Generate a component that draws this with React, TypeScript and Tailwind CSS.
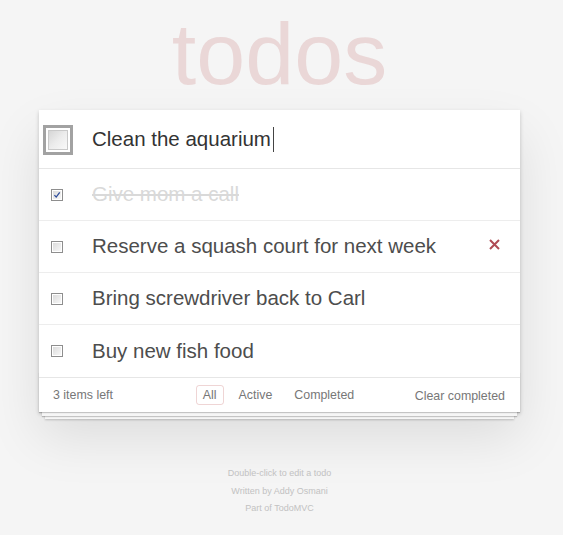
import React from 'react';

type Todo = {
  id: number;
  title: string;
  completed: boolean;
};

const todos: Todo[] = [
  { id: 1, title: 'Give mom a call', completed: true },
  { id: 2, title: 'Reserve a squash court for next week', completed: false },
  { id: 3, title: 'Bring screwdriver back to Carl', completed: false },
  { id: 4, title: 'Buy new fish food', completed: false },
];

function SmallCheckbox({ checked }: { checked: boolean }) {
  return (
    <div className="w-[12px] h-[12px] border border-[#8e8e8e] bg-white p-px">
      <div className="relative w-full h-full bg-gradient-to-br from-[#dcdcdc] to-[#f7f7f7]">
        {checked && (
          <svg viewBox="0 0 10 10" className="absolute inset-0 w-full h-full">
            <path d="M1.8 5.2 L4 7.6 L8.4 1.6" fill="none" stroke="#2c4b9b" strokeWidth="1.6" />
          </svg>
        )}
      </div>
    </div>
  );
}

function ToggleAll() {
  return (
    <div className="w-[30px] h-[30px] border-[3px] border-[#a2a2a2] bg-white p-[2px]">
      <div className="w-full h-full border border-[#c9c9c9] bg-gradient-to-br from-[#d6d6d6] via-[#ececec] to-[#f9f9f9]" />
    </div>
  );
}

function TodoItem({ todo, hovered }: { todo: Todo; hovered?: boolean }) {
  return (
    <li className="h-[52px] flex items-center border-b border-[#ededed] last:border-b-0">
      <div className="w-[53px] pl-[12px]">
        <SmallCheckbox checked={todo.completed} />
      </div>
      <span
        className={
          todo.completed
            ? 'flex-1 text-[20.5px] text-[#d9d9d9] line-through'
            : 'flex-1 text-[20.5px] text-[#4d4d4d]'
        }
      >
        {todo.title}
      </span>
      {hovered && (
        <svg viewBox="0 0 11 11" className="w-[11px] h-[11px] mr-[20px] mb-[5px]">
          <path d="M1 1 L10 10 M10 1 L1 10" stroke="#b04b55" strokeWidth="2" />
        </svg>
      )}
    </li>
  );
}

export default function App() {
  return (
    <div className="min-h-[535px] bg-[#f5f5f5] font-['Liberation_Sans',Arial,sans-serif]">
      <div className="w-[559px] pt-[10px]">
        <h1 className="h-[88px] text-center text-[88px] leading-[88px] text-[rgba(175,47,47,0.15)]">
          todos
        </h1>

        <section className="mt-[12px] mx-auto w-[481px] bg-white shadow-[0_2px_4px_0_rgba(0,0,0,0.2),0_25px_50px_0_rgba(0,0,0,0.1)]">
          <header className="h-[58px] flex items-center">
            <div className="w-[53px] pl-[4px] pt-[2px]">
              <ToggleAll />
            </div>
            <div className="flex items-center text-[20.5px] text-[#333]">
              Clean the aquarium
              <span className="inline-block w-px h-[25px] bg-[#444] ml-[2px]" />
            </div>
          </header>

          <ul className="border-t border-[#e6e6e6]">
            {todos.map((todo) => (
              <TodoItem key={todo.id} todo={todo} hovered={todo.id === 2} />
            ))}
          </ul>

          <footer className="relative h-[35px] border-t border-[#e6e6e6] flex items-center text-[12.4px] text-[#777]">
            <div className="absolute inset-x-0 bottom-0 h-[40px] overflow-hidden shadow-[0_1px_1px_rgba(0,0,0,0.2),0_7px_0_-3px_#f6f6f6,0_8px_1px_-3px_rgba(0,0,0,0.2),0_13px_0_-6px_#f6f6f6,0_14px_2px_-6px_rgba(0,0,0,0.2)]" />
            <span className="relative pl-[14px] w-[150px]">3 items left</span>
            <ul className="relative flex-1 flex justify-center -ml-[2px]">
              <li className="mx-[4px] px-[6px] py-[2px] leading-[14px] border border-[rgba(175,47,47,0.2)] rounded-[3px]">
                All
              </li>
              <li className="mx-[4px] px-[6px] py-[2px] leading-[14px] border border-transparent">Active</li>
              <li className="mx-[4px] px-[6px] py-[2px] leading-[14px] border border-transparent">Completed</li>
            </ul>
            <span className="relative w-[150px] text-right pr-[15px] pt-[2px]">Clear completed</span>
          </footer>
        </section>

        <footer className="mt-[53px] text-center text-[9px] leading-[17.5px] text-[#c2c2c2]">
          <p>Double-click to edit a todo</p>
          <p>Written by Addy Osmani</p>
          <p>Part of TodoMVC</p>
        </footer>
      </div>
    </div>
  );
}
